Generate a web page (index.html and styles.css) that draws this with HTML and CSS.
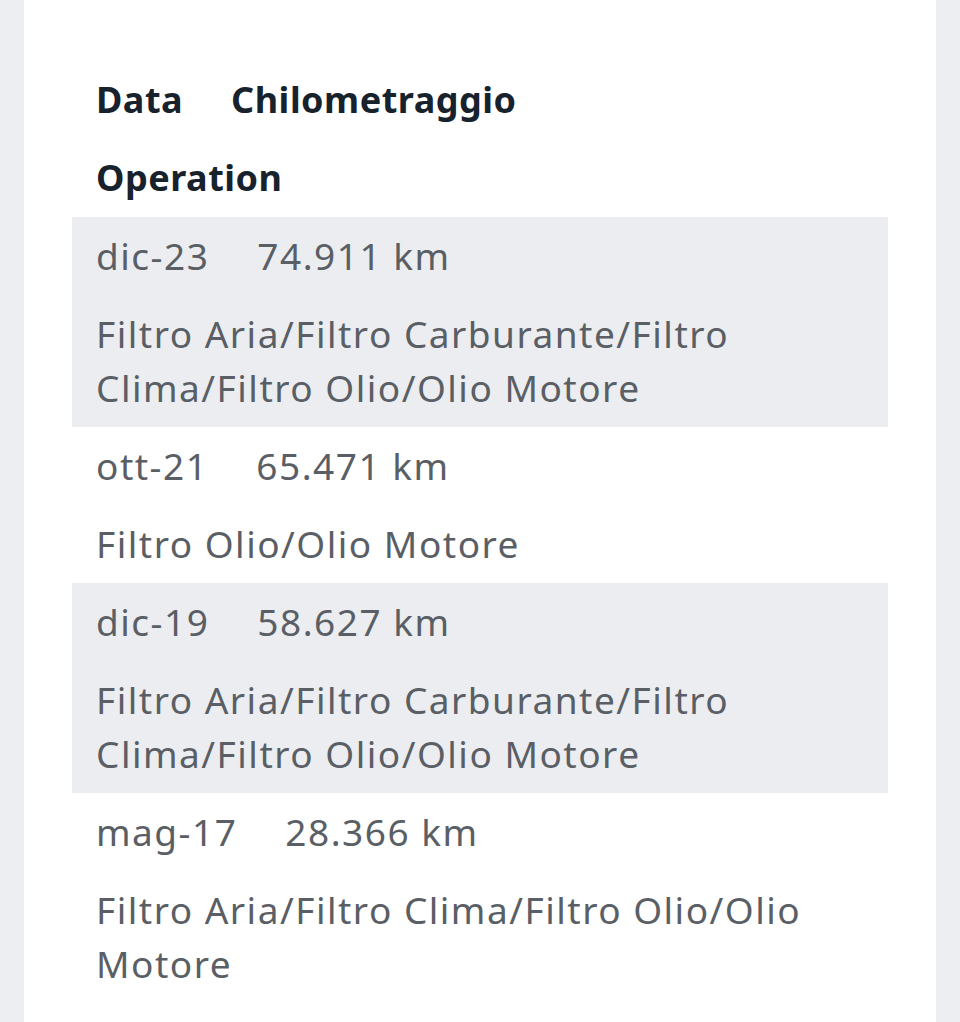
FILE: index.html
```html
<!DOCTYPE html>
<html lang="it">
<head>
<meta charset="utf-8">
<title>Manutenzione</title>
<link rel="stylesheet" href="styles.css">
</head>
<body>
<div class="card">
  <div class="list">
    <div class="row head"><span class="cell">Data</span><span class="cell">Chilometraggio</span></div>
    <div class="row head"><span class="cell">Operation</span></div>

    <div class="group shaded">
      <div class="row"><span class="cell">dic-23</span><span class="cell">74.911 km</span></div>
      <div class="row"><span class="cell">Filtro Aria/Filtro Carburante/Filtro Clima/Filtro Olio/Olio Motore</span></div>
    </div>
    <div class="group">
      <div class="row"><span class="cell">ott-21</span><span class="cell">65.471 km</span></div>
      <div class="row"><span class="cell">Filtro Olio/Olio Motore</span></div>
    </div>
    <div class="group shaded">
      <div class="row"><span class="cell">dic-19</span><span class="cell">58.627 km</span></div>
      <div class="row"><span class="cell">Filtro Aria/Filtro Carburante/Filtro Clima/Filtro Olio/Olio Motore</span></div>
    </div>
    <div class="group">
      <div class="row"><span class="cell">mag-17</span><span class="cell">28.366 km</span></div>
      <div class="row"><span class="cell">Filtro Aria/Filtro Clima/Filtro Olio/Olio Motore</span></div>
    </div>
  </div>
</div>
</body>
</html>
```
FILE: styles.css
```css
html, body {
  margin: 0;
  padding: 0;
  background: #eceef1;
}
body {
  padding: 0 24px;
  font-family: "Noto Sans", "Open Sans", sans-serif;
  font-size: 37px;
  letter-spacing: 1.5px;
  line-height: 54px;
  color: #5a5e65;
}
.card {
  background: #fff;
  padding: 61px 48px 40px;
  min-height: 1022px;
  box-sizing: border-box;
}
.row {
  display: flex;
}
.cell {
  padding: 12px 24px;
}
.head {
  font-size: 36px;
  letter-spacing: 0.5px;
  font-weight: 700;
  color: #17222c;
}
.shaded {
  background: #ebedf0;
}
```
